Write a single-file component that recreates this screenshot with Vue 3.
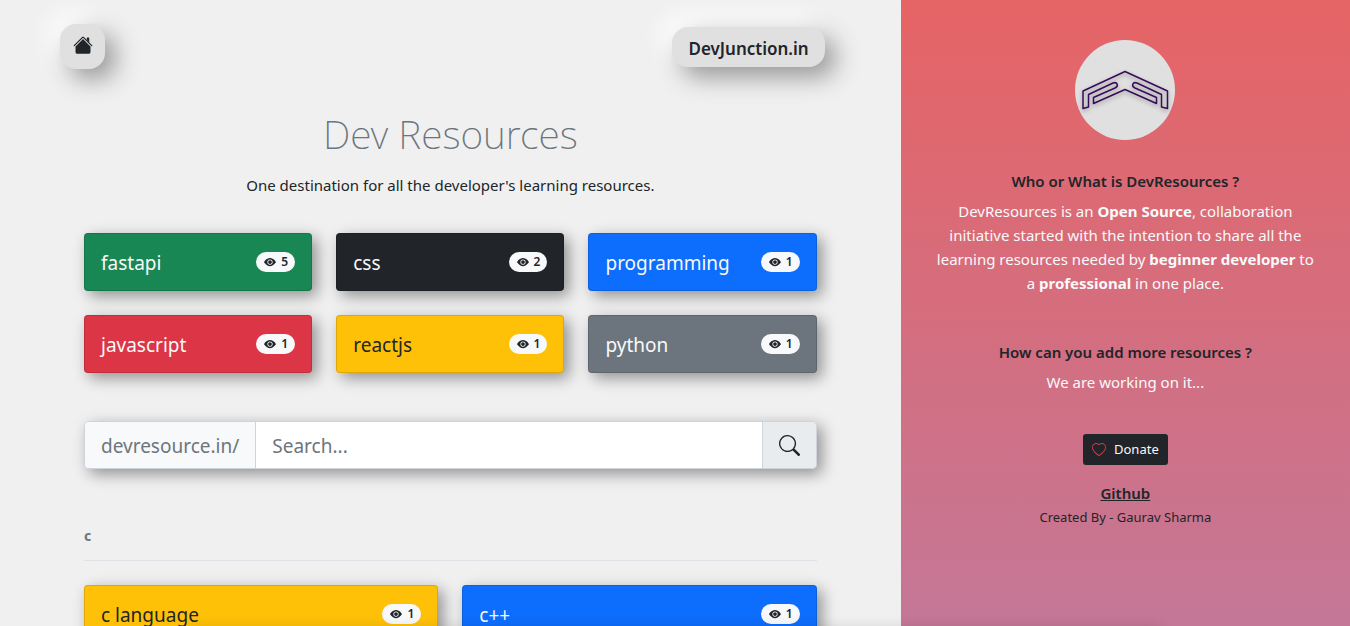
<script setup>
const topTags = [
  { name: 'fastapi', views: 5, tone: 'green' },
  { name: 'css', views: 2, tone: 'dark' },
  { name: 'programming', views: 1, tone: 'blue' },
  { name: 'javascript', views: 1, tone: 'red' },
  { name: 'reactjs', views: 1, tone: 'yellow' },
  { name: 'python', views: 1, tone: 'gray' },
]
const groups = [
  {
    letter: 'c',
    tags: [
      { name: 'c language', views: 1, tone: 'yellow' },
      { name: 'c++', views: 1, tone: 'blue' },
    ],
  },
]
</script>

<template>
  <div class="page">
    <main class="main">
      <nav class="nav">
        <a href="#" class="soft home" aria-label="Home">
          <svg width="20" height="20" viewBox="0 0 16 16" fill="currentColor" aria-hidden="true">
            <path d="m8 3.293 6 6V13.5a1.5 1.5 0 0 1-1.5 1.5h-9A1.5 1.5 0 0 1 2 13.5V9.293l6-6zm5-.793V6l-2-2V2.5a.5.5 0 0 1 .5-.5h1a.5.5 0 0 1 .5.5z" />
            <path d="M7.293 1.5a1 1 0 0 1 1.414 0l6.647 6.646a.5.5 0 0 1-.708.708L8 2.207 1.354 8.854a.5.5 0 1 1-.708-.708L7.293 1.5z" />
          </svg>
        </a>
        <a href="#" class="soft brand">DevJunction.in</a>
      </nav>

      <div class="content">
        <header class="intro">
          <h1>Dev Resources</h1>
          <p>One destination for all the developer's learning resources.</p>
        </header>

        <div class="grid three">
          <a v-for="tag in topTags" :key="tag.name" href="#" class="card" :class="tag.tone">
            <span>{{ tag.name }}</span>
            <span class="badge">
              <svg width="12" height="12" viewBox="0 0 16 16" fill="currentColor" aria-hidden="true">
                <path d="M10.5 8a2.5 2.5 0 1 1-5 0 2.5 2.5 0 0 1 5 0z" />
                <path d="M0 8s3-5.5 8-5.5S16 8 16 8s-3 5.5-8 5.5S0 8 0 8zm8 3.5a3.5 3.5 0 1 0 0-7 3.5 3.5 0 0 0 0 7z" />
              </svg>
              {{ tag.views }}
            </span>
          </a>
        </div>

        <form class="search" @submit.prevent>
          <label for="q">devresource.in/</label>
          <input id="q" type="text" placeholder="Search..." />
          <button type="submit" aria-label="Search">
            <svg width="21" height="21" viewBox="0 0 16 16" fill="currentColor" aria-hidden="true">
              <path d="M11.742 10.344a6.5 6.5 0 1 0-1.397 1.398h-.001c.03.04.062.078.098.115l3.85 3.85a1 1 0 0 0 1.415-1.414l-3.85-3.85a1.007 1.007 0 0 0-.115-.1zM12 6.5a5.5 5.5 0 1 1-11 0 5.5 5.5 0 0 1 11 0z" />
            </svg>
          </button>
        </form>

        <section v-for="group in groups" :key="group.letter">
          <h2>{{ group.letter }}</h2>
          <div class="grid two">
            <a v-for="tag in group.tags" :key="tag.name" href="#" class="card" :class="tag.tone">
              <span>{{ tag.name }}</span>
              <span class="badge">
                <svg width="12" height="12" viewBox="0 0 16 16" fill="currentColor" aria-hidden="true">
                  <path d="M10.5 8a2.5 2.5 0 1 1-5 0 2.5 2.5 0 0 1 5 0z" />
                  <path d="M0 8s3-5.5 8-5.5S16 8 16 8s-3 5.5-8 5.5S0 8 0 8zm8 3.5a3.5 3.5 0 1 0 0-7 3.5 3.5 0 0 0 0 7z" />
                </svg>
                {{ tag.views }}
              </span>
            </a>
          </div>
        </section>
      </div>
    </main>

    <aside class="side">
      <svg class="logo" width="100" height="100" viewBox="0 0 100 100" role="img" aria-label="DevResources logo">
        <circle cx="50" cy="50" r="50" fill="#e0e0e0" />
        <g class="mark" fill="none" stroke="#3a0a5c" stroke-width="1.5" stroke-linejoin="round">
          <path d="M50 31.500 L92.500 51 V68.500 L86.500 67 V54.500 L62 43 C57.500 41.500 56 46 60 48 L81.500 57.500 V63.500 L50 49.500 L18.500 63.500 V57.500 L40 48 C44 46 42.500 41.500 38 43 L13.500 54.500 V67 L8 68.500 V51 Z" />
        </g>
      </svg>

      <h3>Who or What is DevResources ?</h3>
      <p class="about">
        DevResources is an <b>Open Source</b>, collaboration initiative started with the intention to share all the
        learning resources needed by <b>beginner developer</b> to a <b>professional</b> in one place.
      </p>
      <h3>How can you add more resources ?</h3>
      <p class="about">We are working on it...</p>

      <button type="button" class="donate">
        <svg width="14" height="14" viewBox="0 0 16 16" fill="#dc3545" aria-hidden="true">
          <path d="m8 2.748-.717-.737C5.6.281 2.514.878 1.4 3.053c-.523 1.023-.641 2.5.314 4.385.92 1.815 2.834 3.989 6.286 6.357 3.452-2.368 5.365-4.542 6.286-6.357.955-1.886.838-3.362.314-4.385C13.486.878 10.4.28 8.717 2.01L8 2.748zM8 15C-7.333 4.868 3.279-3.04 7.824 1.143c.06.055.119.112.176.171a3.12 3.12 0 0 1 .176-.17C12.72-3.042 23.333 4.867 8 15z" />
        </svg>
        Donate
      </button>
      <a href="#" class="github">Github</a>
      <small>Created By - Gaurav Sharma</small>
    </aside>
  </div>
</template>

<style>
body {
  margin: 0;
  background: #f0f0f0;
}
</style>

<style scoped>
.page,
.page * {
  box-sizing: border-box;
}
.page {
  position: relative;
  display: grid;
  grid-template-columns: 66.72% minmax(0, 1fr);
  height: 100vh;
  overflow: hidden;
  font: 400 15px/24px "Noto Sans", "Liberation Sans", sans-serif;
  color: #212529;
}
.page::after {
  content: "";
  position: absolute;
  top: 100%;
  left: 14%;
  right: 14%;
  height: 40px;
  box-shadow: 0 0 12px rgba(0, 0, 0, 0.1);
}
a {
  color: inherit;
  text-decoration: none;
}
.main {
  min-width: 0;
  padding: 24px 60px 0;
  overflow: hidden;
  background: #f0f0f0;
}
.nav {
  display: flex;
  justify-content: space-between;
  align-items: center;
  padding-right: 16px;
}
.soft {
  background: #e0e0e0;
  border-radius: 16px;
  box-shadow: 10px 10px 24px #989898, -10px -10px 24px #ffffff;
}
.home {
  display: flex;
  justify-content: center;
  width: 45px;
  height: 45px;
  padding-top: 11px;
}
.brand {
  padding: 10px 16px 6px;
  font-weight: 600;
  font-size: 17px;
}
.content {
  padding: 0 24px;
}
.intro {
  padding: 41px 0 36px;
  text-align: center;
}
h1 {
  margin: 0 0 15px;
  font-size: 39px;
  line-height: 48px;
  font-weight: 200;
  color: #6c757d;
}
p {
  margin: 0;
}
.grid {
  display: grid;
  gap: 24px;
}
.three {
  grid-template-columns: repeat(3, minmax(0, 1fr));
}
.two {
  grid-template-columns: repeat(2, minmax(0, 1fr));
}
.card {
  display: flex;
  justify-content: space-between;
  align-items: center;
  height: 58px;
  padding: 0 16px;
  border: 1px solid rgba(0, 0, 0, 0.125);
  border-radius: 4px;
  font-size: 19px;
  line-height: 32px;
  color: #f8f9fa;
  box-shadow: 5px 5px 15px rgba(0, 0, 0, 0.4);
}
.green { background-color: #198754; }
.dark { background-color: #212529; }
.blue { background-color: #0d6efd; }
.red { background-color: #dc3545; }
.gray { background-color: #6c757d; }
.yellow {
  background-color: #ffc107;
  color: #212529;
}
.card > span:first-child {
  padding-top: 2px;
}
.badge {
  display: flex;
  align-items: center;
  gap: 5px;
  height: 20px;
  padding: 0 7px 0 8px;
  border-radius: 10px;
  background: #f8f9fa;
  color: #212529;
  font-size: 12px;
  line-height: 20px;
  font-weight: 600;
}
.search {
  display: flex;
  height: 48px;
  margin-top: 48px;
  border: 1px solid #ced4da;
  border-radius: 5px;
  font-size: 19px;
  color: #6c757d;
  box-shadow: 5px 5px 15px rgba(0, 0, 0, 0.4);
}
.search label {
  padding: 0 16px;
  border-right: 1px solid #ced4da;
  border-radius: 4px 0 0 4px;
  background: #f8f9fa;
  line-height: 48px;
}
.search input {
  flex: 1;
  min-width: 0;
  padding: 2px 16px 0;
  border: 0;
  background: #fff;
  font: inherit;
  color: #212529;
}
.search input::placeholder {
  color: #6c757d;
  opacity: 1;
}
.search button {
  display: flex;
  align-items: center;
  padding: 0 16px;
  border: 0;
  border-left: 1px solid #ced4da;
  border-radius: 0 4px 4px 0;
  background: #e9ecef;
  color: #212529;
}
h2 {
  margin: 55px 0 24px;
  padding-bottom: 12px;
  border-bottom: 1px solid #dee2e6;
  font-size: 14px;
  line-height: 24px;
  font-weight: 700;
  color: #6c757d;
}
.side {
  display: flex;
  flex-direction: column;
  align-items: center;
  padding: 40px 32px 0;
  text-align: center;
  background: linear-gradient(#e66465, #c47797);
}
.mark {
  filter: drop-shadow(0 2px 2px rgba(0, 0, 0, 0.35));
}
.logo {
  margin-bottom: 32px;
}
h3 {
  margin: 0 0 8px;
  font-size: 15px;
  line-height: 19px;
  font-weight: 600;
}
.about {
  margin-bottom: 48px;
  color: #f8f9fa;
}
.donate {
  display: flex;
  align-items: center;
  gap: 8px;
  margin-top: -8px;
  padding: 5px 9px;
  border: 0;
  border-radius: 3px;
  background: #212529;
  color: #f8f9fa;
  font: 13px/21px "Noto Sans", sans-serif;
}
.github {
  margin-top: 16px;
  font-weight: 600;
  text-decoration: underline;
}
small {
  font-size: 13px;
}
</style>
